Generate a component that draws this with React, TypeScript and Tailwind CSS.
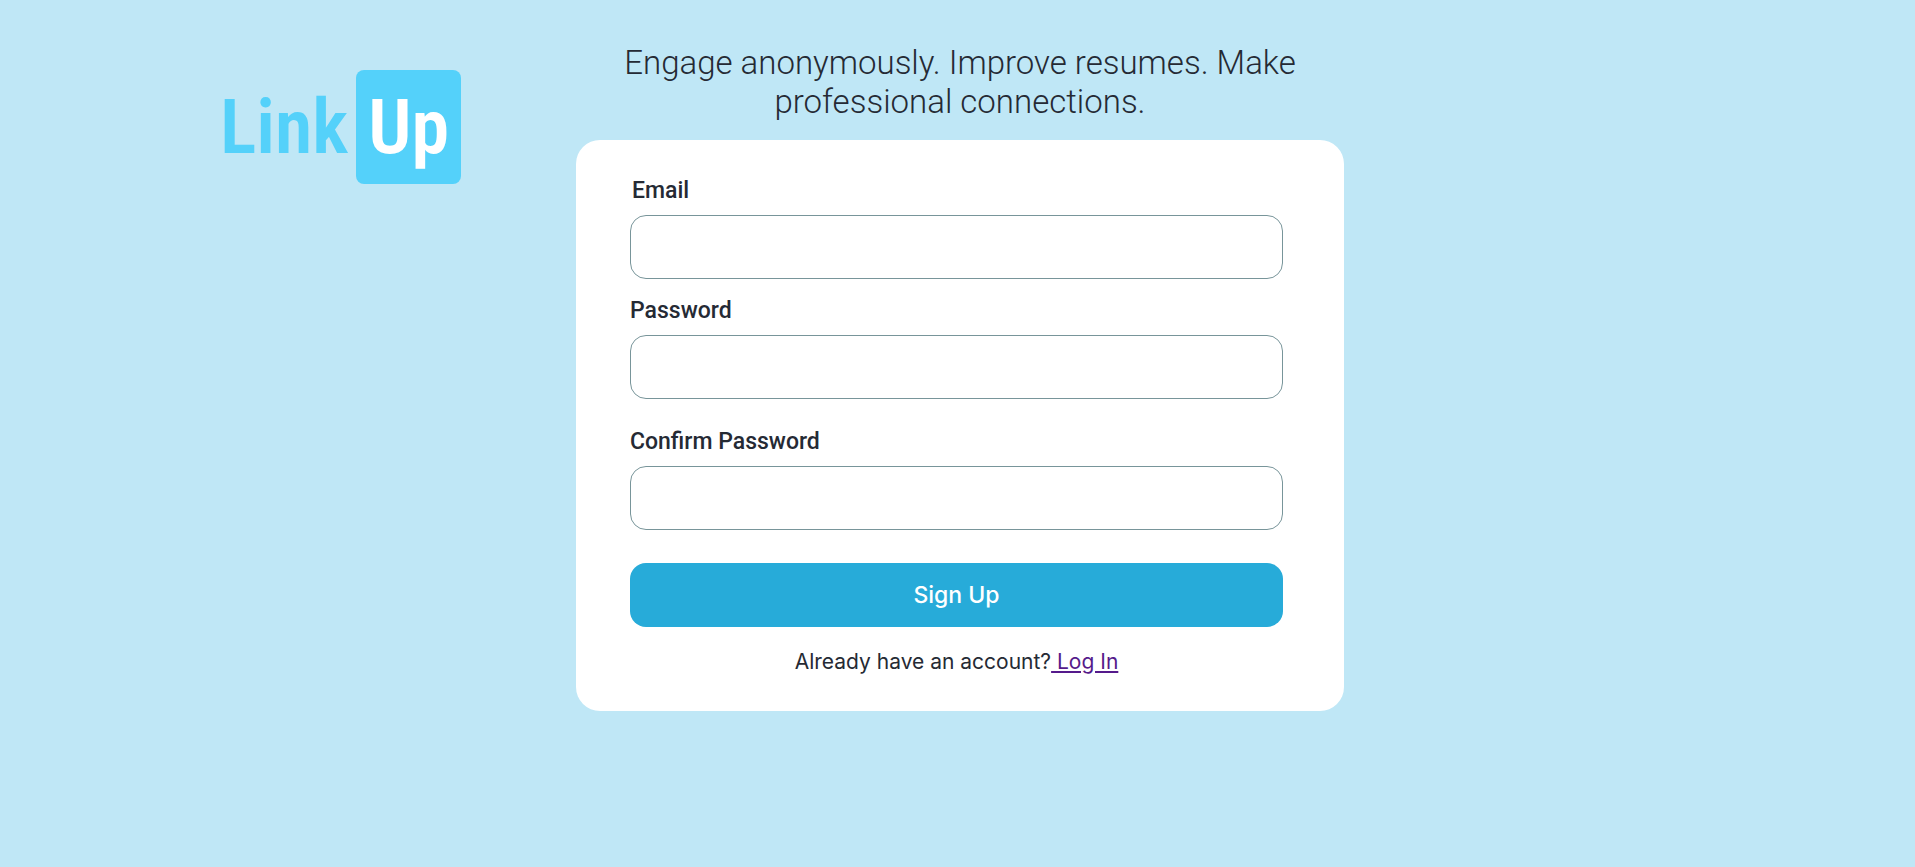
type FieldProps = {
  id: string;
  label: string;
  type: string;
  labelClass?: string;
};

function Field({ id, label, type, labelClass = "" }: FieldProps) {
  return (
    <div className="flex flex-col gap-2">
      <label
        htmlFor={id}
        className={`font-[Roboto,sans-serif] text-[23px] leading-8 font-medium ${labelClass}`}
      >
        {label}
      </label>
      <input
        id={id}
        name={id}
        type={type}
        className="h-16 w-full rounded-2xl border border-[#78959a] bg-white px-4 text-xl outline-none"
      />
    </div>
  );
}

function Logo() {
  return (
    <div className="flex items-center gap-2 font-['Roboto_Condensed',Roboto,sans-serif] text-[76px] leading-[114px] font-semibold text-[#54d1fa]">
      <span>Link</span>
      <span className="rounded-lg bg-[#54d1fa] px-3 text-white">Up</span>
    </div>
  );
}

export default function App() {
  return (
    <div className="grid min-h-screen grid-cols-[576fr_768fr_571fr] items-start bg-[#bfe7f6] text-[#252a34]">
      <header className="flex justify-end pt-[70px] pr-[115px]">
        <Logo />
      </header>
      <main className="flex flex-col gap-[19px] pt-[43px]">
        <h1 className="px-8 text-center font-[Roboto,sans-serif] text-[33px] leading-[39px] font-light">
          Engage anonymously. Improve resumes. Make professional connections.
        </h1>
        <form
          className="flex flex-col rounded-3xl bg-white pt-[35px] pr-[61px] pb-[33px] pl-[54px]"
          onSubmit={(event) => event.preventDefault()}
        >
          <div className="flex flex-col gap-4">
            <Field id="email" label="Email" type="email" labelClass="pl-[2px]" />
            <Field id="password" label="Password" type="password" />
          </div>
          <div className="mt-[27px] flex flex-col gap-[33px]">
            <Field id="confirm-password" label="Confirm Password" type="password" />
            <button
              type="submit"
              className="h-16 w-full cursor-pointer rounded-2xl bg-[#27abd9] font-[Inter,sans-serif] text-[23px] font-medium text-white"
            >
              Sign Up
            </button>
          </div>
          <p className="mt-[19px] text-center font-[Inter,sans-serif] text-[21px] leading-8">
            Already have an account?
            <a href="#login" className="text-[#551a8b] underline">
              {" "}
              Log In
            </a>
          </p>
        </form>
      </main>
    </div>
  );
}
